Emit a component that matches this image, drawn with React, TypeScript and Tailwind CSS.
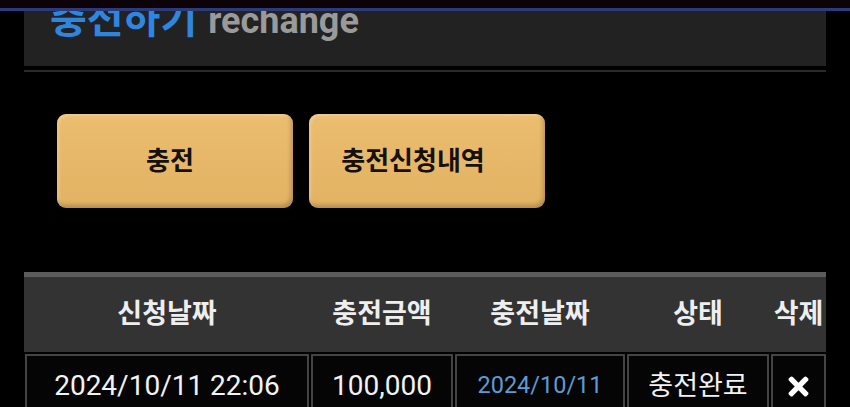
import { FaTimes } from "react-icons/fa";

const columns = [
  { label: "신청날짜" },
  { label: "충전금액" },
  { label: "충전날짜" },
  { label: "상태" },
  { label: "삭제" },
];

const actions = [
  { label: "충전", pad: "pr-[10px]" },
  { label: "충전신청내역", pad: "pr-[28px]" },
];

const gridCols = "grid grid-cols-[284px_142px_170px_142px_55px] gap-x-[2px]";

export default function App() {
  return (
    <div className="h-[407px] overflow-hidden bg-black text-white [font-family:Roboto,'Noto_Sans_CJK_KR',sans-serif]">
      {/* top app bar edge */}
      <div className="h-[8px] bg-[#0b0308]" />
      <div className="h-[3px] bg-[#2b3b7c]" />

      <div className="w-[802px] ml-[24px]">
        {/* page title panel */}
        <div className="h-[55px] overflow-hidden bg-[#222222] pl-[26px]">
          <h1 className="-mt-[9px] flex items-baseline gap-[11px] text-[36px] leading-[36px] font-bold whitespace-nowrap">
            <span className="text-[40px] text-[#2f86e0]">충전하기</span>
            <span className="text-[#9a9a9a]">rechange</span>
          </h1>
        </div>
        <div className="mt-[4px] h-[2px] bg-[#2b2b2b]" />

        {/* action buttons */}
        <div className="mt-[42px] flex gap-[16px] pl-[33px]">
          {actions.map((a) => (
            <button
              key={a.label}
              type="button"
              className={`flex h-[94px] w-[236px] items-center justify-center rounded-[9px] bg-gradient-to-b from-[#ebbd6f] to-[#e3b263] text-[26px] font-bold text-[#15110a] shadow-[inset_-2px_-3px_4px_rgba(0,0,0,0.22),inset_2px_2px_3px_rgba(255,255,255,0.25)] ${a.pad}`}
            >
              {a.label}
            </button>
          ))}
        </div>

        {/* history table */}
        <div className="mt-[64px]">
          <div className="border-t-[5px] border-[#5c5c5c] bg-[#333333]">
            <div className={`${gridCols} h-[75px] pl-[1px]`}>
              {columns.map((col) => (
                <div
                  key={col.label}
                  className="flex items-center justify-center text-[27px] font-bold text-[#eeeeee]"
                >
                  {col.label}
                </div>
              ))}
            </div>
          </div>

          <div className={`${gridCols} mt-[2px] pl-[1px]`}>
            <div className="flex h-[64px] items-center justify-center border-2 border-[#444444] bg-[#050505] text-[28px] text-[#f2f2f2]">
              2024/10/11 22:06
            </div>
            <div className="flex h-[64px] items-center justify-center border-2 border-[#444444] bg-[#050505] text-[28px] text-[#f2f2f2]">
              100,000
            </div>
            <div className="flex h-[64px] items-center justify-center border-2 border-[#444444] bg-[#050505] text-[23.5px] text-[#5d9bd6]">
              2024/10/11
            </div>
            <div className="flex h-[64px] items-center justify-center border-2 border-[#444444] bg-[#050505] text-[27px] text-[#f2f2f2]">
              충전완료
            </div>
            <div className="flex h-[64px] items-center justify-center border-2 border-[#444444] bg-[#050505] text-white">
              <FaTimes className="h-[29px] w-[29px]" />
            </div>
          </div>
        </div>
      </div>
    </div>
  );
}
